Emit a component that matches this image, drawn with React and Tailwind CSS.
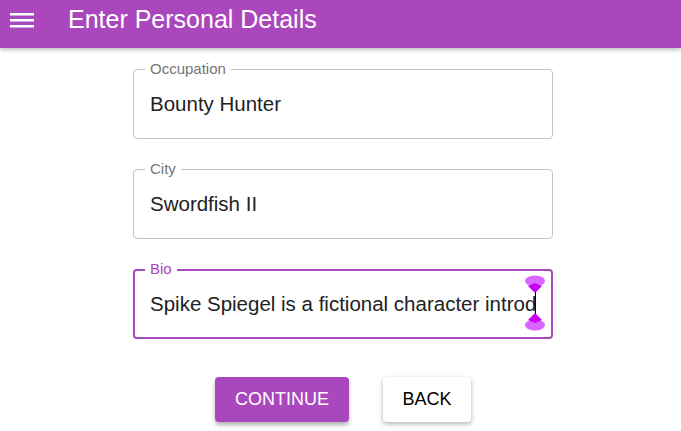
import { useState } from 'react'

const font = { fontFamily: '"Liberation Sans", Arial, sans-serif' }

function Field({ label, value, focused, children }) {
  return (
    <div
      className={`relative h-[70px] rounded-[4px] ${
        focused ? 'border-2 border-[#ab47bc] px-[15px]' : 'border border-[#c4c4c4] px-[16px]'
      }`}
    >
      <span
        className={`absolute top-[-9px] bg-white px-[5px] text-[15px] leading-[16px] ${
          focused ? 'left-[10px] top-[-10px] text-[#ab47bc]' : 'left-[11px] text-[#757575]'
        }`}
      >
        {label}
      </span>
      <div className="flex h-full items-center text-[20.5px] text-[#222]">
        <span className="whitespace-nowrap">{value}</span>
        {children}
      </div>
    </div>
  )
}

function Handle({ flip }) {
  return (
    <svg width="22" height="18" viewBox="0 0 22 18" className="block">
      {flip ? (
        <>
          <ellipse cx="11" cy="12" rx="10" ry="5.5" fill="#d966ff" />
          <path d="M11 0 L18 7 L11 10 L4 7 Z" fill="#c600f5" />
        </>
      ) : (
        <>
          <ellipse cx="11" cy="6" rx="10" ry="5.5" fill="#d966ff" />
          <path d="M4 11 L11 8 L18 11 L11 18 Z" fill="#c600f5" />
        </>
      )}
    </svg>
  )
}

export default function App() {
  const [form] = useState({
    occupation: 'Bounty Hunter',
    city: 'Swordfish II',
    bio: 'Spike Spiegel is a fictional character introd',
  })

  return (
    <div className="min-h-[431px] w-[681px] overflow-hidden bg-white" style={font}>
      <header className="flex h-[48px] items-center bg-[#ab47bc] pb-[9px] text-white shadow-[0_2px_4px_rgba(0,0,0,0.25)]">
        <svg width="24" height="24" viewBox="0 0 24 24" className="ml-[10px]">
          <path d="M0 5h24v2.5H0zM0 11h24v2.5H0zM0 17h24v2.5H0z" fill="white" />
        </svg>
        <h1 className="ml-[34px] text-[25px] leading-none">Enter Personal Details</h1>
      </header>
      <main className="flex justify-center pl-[5px] pt-[21px]">
        <div className="flex w-[420px] flex-col">
          <div className="flex flex-col gap-[30px]">
            <Field label="Occupation" value={form.occupation} />
            <Field label="City" value={form.city} />
            <Field label="Bio" value={form.bio} focused>
              <span className="relative ml-[-1px] inline-block h-[28px] w-[1px] bg-black">
                <span className="absolute left-[-11px] top-[-15px]">
                  <Handle />
                </span>
                <span className="absolute left-[-11px] top-[23px]">
                  <Handle flip />
                </span>
              </span>
            </Field>
          </div>
          <div className="mt-[38px] flex justify-center gap-[34px]">
            <button className="h-[45px] w-[134px] rounded-[4px] bg-[#ab47bc] text-[18px] text-white shadow-[0_3px_4px_rgba(0,0,0,0.3)]">
              CONTINUE
            </button>
            <button className="h-[45px] w-[88px] rounded-[4px] bg-white text-[18px] text-black shadow-[0_2px_5px_rgba(0,0,0,0.3)]">
              BACK
            </button>
          </div>
        </div>
      </main>
    </div>
  )
}
